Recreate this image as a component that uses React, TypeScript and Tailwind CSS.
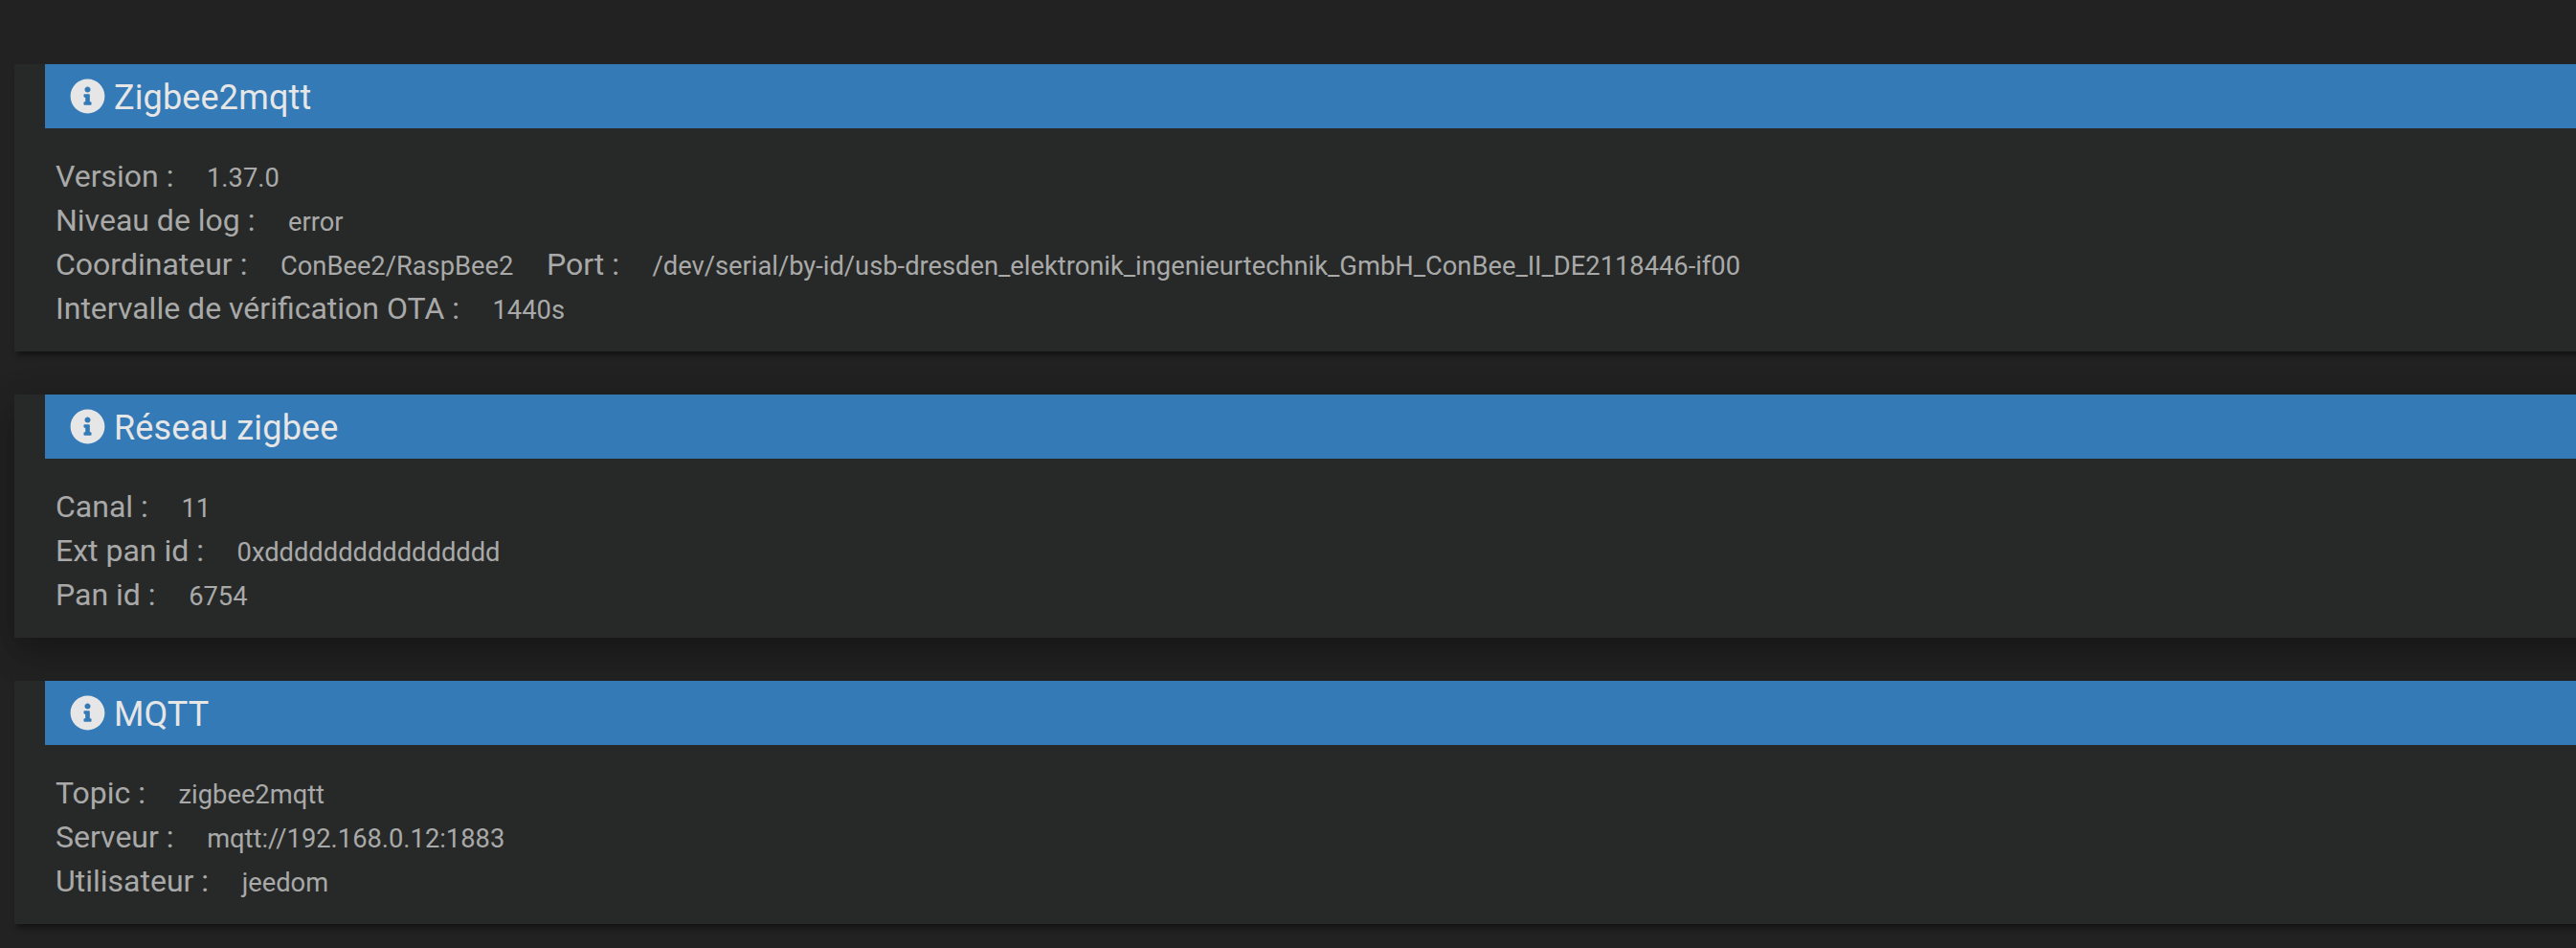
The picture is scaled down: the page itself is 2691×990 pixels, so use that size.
import React from "react";
import { FaInfoCircle } from "react-icons/fa";

const panels = [
  {
    id: 1,
    title: "Zigbee2mqtt",
    raised: false,
    rows: [
      [{ label: "Version :", value: "1.37.0" }],
      [{ label: "Niveau de log :", value: "error" }],
      [
        { label: "Coordinateur :", value: "ConBee2/RaspBee2" },
        {
          label: "Port :",
          value:
            "/dev/serial/by-id/usb-dresden_elektronik_ingenieurtechnik_GmbH_ConBee_II_DE2118446-if00",
        },
      ],
      [{ label: "Intervalle de vérification OTA :", value: "1440s" }],
    ],
  },
  {
    id: 2,
    title: "Réseau zigbee",
    raised: true,
    rows: [
      [{ label: "Canal :", value: "11" }],
      [{ label: "Ext pan id :", value: "0xdddddddddddddddd" }],
      [{ label: "Pan id :", value: "6754" }],
    ],
  },
  {
    id: 3,
    title: "MQTT",
    raised: false,
    rows: [
      [{ label: "Topic :", value: "zigbee2mqtt" }],
      [{ label: "Serveur :", value: "mqtt://192.168.0.12:1883" }],
      [{ label: "Utilisateur :", value: "jeedom" }],
    ],
  },
];

const App = () => {
  return (
    <div className="flex h-[990px] flex-col gap-[45px] overflow-hidden bg-[#222222] pl-[15px] pt-[67px] font-['Roboto',sans-serif] text-[#a9a9a9]">
      {panels.map((panel) => (
        <section
          key={panel.id}
          className={
            panel.raised
              ? "-mr-10 shrink-0 bg-[#272928] pb-[22px] shadow-[0_16px_34px_0_rgba(0,0,0,0.2),0_12px_40px_0_rgba(0,0,0,0.19)]"
              : "-mr-10 shrink-0 bg-[#272928] pb-[22px] shadow-[0_7px_6px_-3px_rgba(0,0,0,0.45)]"
          }
        >
          <h3 className="ml-8 flex h-[67px] items-center bg-[#337ab7] pl-[26px] text-[36px] leading-[40px] tracking-[0.15px] text-[#e6e6e6]">
            <FaInfoCircle className="mr-[9px] size-[37px]" />
            <span className="pt-0.5">{panel.title}</span>
          </h3>
          <div className="pl-[43px] pt-[27px]">
            {panel.rows.map((row) => (
              <div key={row[0].label} className="flex h-[46px] items-baseline">
                {row.map((field) => (
                  <React.Fragment key={field.label}>
                    <span className="text-[32px] leading-[46px]">
                      {field.label}
                    </span>
                    <span className="pl-[34.6px] pr-[34.6px] text-[27.3px]">
                      {field.value}
                    </span>
                  </React.Fragment>
                ))}
              </div>
            ))}
          </div>
        </section>
      ))}
    </div>
  );
};
export default App;
